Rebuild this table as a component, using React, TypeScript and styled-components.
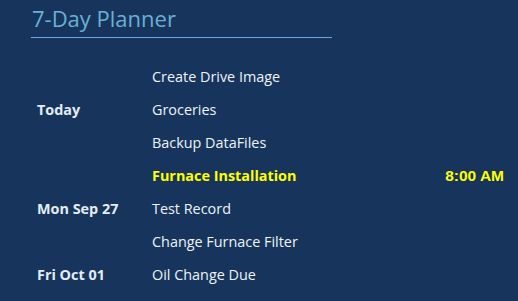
import React from "react";
import styled, { createGlobalStyle } from "styled-components";

const GlobalStyle = createGlobalStyle`
  html, body {
    margin: 0;
    padding: 0;
    background: #17355c;
  }
  body {
    font-family: "Open Sans", "Noto Sans", sans-serif;
  }
`;

const Page = styled.div`
  width: 518px;
  height: 301px;
  box-sizing: border-box;
  padding: 4px 14px 0 31px;
  background: #17355c;
  overflow: hidden;
`;

const Title = styled.h1`
  width: 300px;
  margin: 0;
  padding: 0 0 4px 1px;
  font-size: 22px;
  font-weight: 400;
  line-height: 29px;
  color: #68b0d6;
  border-bottom: 1px solid #6aa6e4;
`;

const Agenda = styled.div`
  margin-top: 22px;
  padding-left: 6px;
`;

const Group = styled.div`
  display: flex;
`;

const DayLabel = styled.div`
  width: 115px;
  flex: none;
  display: flex;
  align-items: center;
  font-size: 14.4px;
  font-weight: 700;
  color: #e4ecf6;
`;

const Items = styled.div`
  flex: 1;
  display: flex;
  flex-direction: column;
`;

const Item = styled.div<{ $hot?: boolean }>`
  height: 33px;
  display: flex;
  align-items: center;
  justify-content: space-between;
  font-size: 14.4px;
  font-weight: ${(p) => (p.$hot ? 700 : 400)};
  color: ${(p) => (p.$hot ? "#ffff00" : "#eef3f9")};
`;

const Time = styled.span`
  font-family: "Liberation Sans", Arial, sans-serif;
  font-size: 15.5px;
  font-weight: 700;
  color: #ffff00;
`;

type Entry = { title: string; time?: string; hot?: boolean };

const days: { label: string; items: Entry[] }[] = [
  {
    label: "Today",
    items: [{ title: "Create Drive Image" }, { title: "Groceries" }, { title: "Backup DataFiles" }],
  },
  {
    label: "Mon Sep 27",
    items: [
      { title: "Furnace Installation", time: "8:00 AM", hot: true },
      { title: "Test Record" },
      { title: "Change Furnace Filter" },
    ],
  },
  {
    label: "Fri Oct 01",
    items: [{ title: "Oil Change Due" }],
  },
];

export default function App() {
  return (
    <Page>
      <GlobalStyle />
      <Title>7-Day Planner</Title>
      <Agenda>
        {days.map((d) => (
          <Group key={d.label}>
            <DayLabel>{d.label}</DayLabel>
            <Items>
              {d.items.map((it) => (
                <Item key={it.title} $hot={it.hot}>
                  <span>{it.title}</span>
                  {it.time && <Time>{it.time}</Time>}
                </Item>
              ))}
            </Items>
          </Group>
        ))}
      </Agenda>
    </Page>
  );
}
